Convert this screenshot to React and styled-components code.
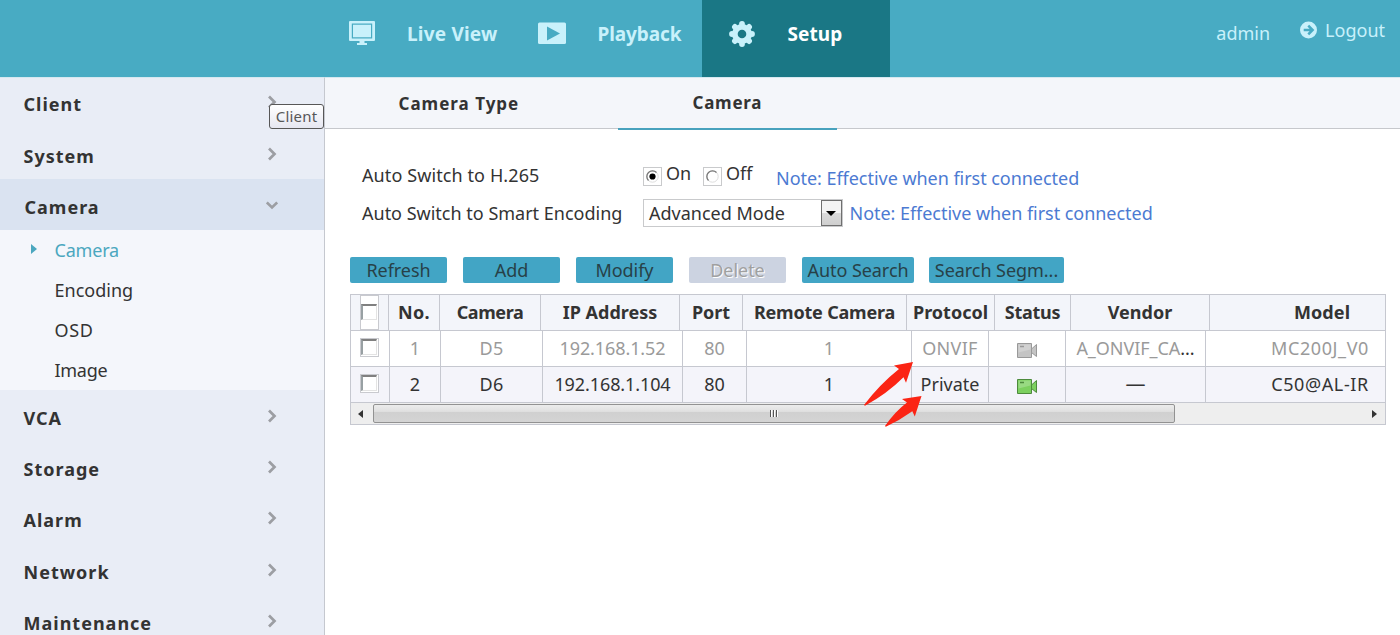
import React from 'react';
import styled, { createGlobalStyle } from 'styled-components';

const GlobalStyle = createGlobalStyle`
  * {
    box-sizing: border-box;
  }

  body {
    margin: 0;
    overflow: hidden;
    background: #fff;
    color: #333;
    font-family: 'Noto Sans', 'Open Sans', sans-serif;
    font-size: 18px;
    line-height: 24px;
  }
`;

const Page = styled.div`
  position: relative;
  display: flex;
  flex-direction: column;
  height: 635px;
  overflow: hidden;
`;

/* Header */

const Header = styled.header`
  display: flex;
  flex: none;
  height: 77px;
  padding-left: 326px;
  background: #48abc3;
  color: #c9f1fb;
`;

const NavItem = styled.a`
  display: grid;
  grid-template-columns: ${props => props.$iconWidth}px auto;
  justify-content: start;
  align-items: start;
  width: 188px;
  padding: 21px 0 0 ${props => props.$left}px;
  background: ${props => (props.$active ? '#1a7785' : 'transparent')};
  color: ${props => (props.$active ? '#fff' : 'inherit')};
  font-size: 19px;
  font-weight: 700;
  line-height: 27px;
  letter-spacing: ${props => props.$spacing || 0}px;

  svg {
    display: block;
    margin-top: -1px;
  }
`;

const UserArea = styled.div`
  display: flex;
  align-items: flex-start;
  margin-left: auto;
  padding: 18px 15px 0 0;

  svg {
    margin: 3px 8px 0 30px;
  }
`;

const UserName = styled.span`
  padding-top: 3px;
`;

/* Sidebar */

const Body = styled.div`
  display: flex;
  flex: 1;
`;

const Sidebar = styled.nav`
  flex: none;
  width: 325px;
  border-top: 1px solid #d5e8f0;
  border-right: 1px solid #c5c8cf;
  background: #e9edf6;
`;

const MenuItem = styled.a`
  display: flex;
  align-items: center;
  justify-content: space-between;
  height: ${props => props.$height}px;
  padding: ${props => props.$top}px 46px 0 ${props => (props.$open ? 24.500 : 23.500)}px;
  background: ${props => (props.$open ? '#dae3f1' : 'transparent')};
  font-weight: 700;
  letter-spacing: 1px;

  svg {
    flex: none;
    margin-top: -4px;
  }
`;

const SubMenu = styled.div`
  height: 160px;
  background: #f4f6fb;
`;

const SubItem = styled.a`
  display: grid;
  grid-template-columns: 25px auto;
  align-items: center;
  height: 40px;
  padding-left: 29.500px;
  color: ${props => (props.$active ? '#4ba7bf' : '#333')};
  letter-spacing: ${props => props.$spacing || 0}px;
`;

const Marker = styled.i`
  width: 0;
  margin: -3px 0 0 1px;
  border: solid transparent;
  border-width: 5px 0 5px 6px;
  border-left-color: ${props => (props.$active ? '#4ba7bf' : 'transparent')};
`;

const Tooltip = styled.div`
  position: absolute;
  left: 269px;
  top: 104px;
  width: 55px;
  height: 25px;
  border: 1px solid #575757;
  border-radius: 3px;
  background: linear-gradient(#fff, #e6e7f1);
  color: #575757;
  font-size: 15px;
  line-height: 22px;
  letter-spacing: 0.2px;
  text-align: center;
`;

/* Content */

const Content = styled.main`
  flex: 1;
  min-width: 0;
`;

const Tabs = styled.div`
  display: flex;
  height: 52px;
  border-top: 1px solid #d5e8f0;
  border-bottom: 1px solid #c6c8cc;
  background: #f4f6fa;
`;

const Tab = styled.a`
  width: ${props => props.$width}px;
  height: ${props => (props.$active ? 52 : 50)}px;
  padding: ${props => (props.$active ? '13px 0 0 74.5px' : '14px 0 0 73.5px')};
  border-bottom: ${props => (props.$active ? '2px solid #48a2bd' : '0')};
  font-size: 17px;
  font-weight: 700;
  letter-spacing: ${props => (props.$active ? 0.75 : 1)}px;
`;

const Form = styled.div`
  display: grid;
  row-gap: 9px;
  padding: 33px 0 0 37px;
`;

const FormRow = styled.div`
  display: flex;
  align-items: flex-start;
  height: ${props => props.$height}px;
`;

const Label = styled.label`
  width: 281px;
  padding-top: ${props => props.$top}px;
  letter-spacing: ${props => props.$spacing || 0}px;
`;

const RadioBox = styled.span`
  display: grid;
  place-items: center;
  width: 19px;
  height: 19px;
  margin: 5px 4px 0 0;
  border: 1px solid #c9cacc;
`;

const RadioText = styled.span`
  width: ${props => props.$width}px;
  margin-top: -1px;
`;

const Note = styled.span`
  padding-top: ${props => props.$top}px;
  padding-left: ${props => props.$left}px;
  color: #4c7ad2;
  letter-spacing: -0.04px;
`;

const Select = styled.div`
  display: flex;
  justify-content: space-between;
  width: 200px;
  height: 28px;
  padding-left: 5px;
  border: 1px solid #c9cacc;
  line-height: 26px;
`;

const SelectButton = styled.span`
  display: grid;
  place-items: center;
  width: 21px;
  height: 26px;
  border: 1px solid #6f6f6f;
  background: linear-gradient(#f3f3f3 48%, #dadada 50%, #cfcfcf);
`;

const Caret = styled.i`
  margin-right: 1px;
  border: solid transparent;
  border-width: 5px 5px 0;
  border-top-color: #000;
`;

const Toolbar = styled.div`
  display: flex;
  padding: 30px 0 0 25px;
`;

const Button = styled.button`
  width: ${props => props.$width || 97}px;
  height: 26px;
  margin-right: ${props => props.$gap || 16}px;
  padding: 0;
  border: 0;
  border-radius: 2px;
  background: ${props => (props.disabled ? '#ccd3e1' : '#42a5c5')};
  color: ${props => (props.disabled ? '#a0a0a0' : '#274148')};
  font: inherit;
  line-height: 26px;
  letter-spacing: -0.05px;
  text-shadow: ${props => (props.disabled ? '1px 1px 0 #fff' : 'none')};
`;

/* Camera table */

const Table = styled.div`
  width: 1036px;
  margin: 11px 0 0 25px;
  border: 1px solid #c6c8d0;
  overflow: hidden;
`;

const Row = styled.div`
  display: grid;
  grid-template-columns: 39px 51px 102px 140px 64px 165px 77px 77px 140px 229px;
  height: 36px;
  border-bottom: 1px solid #c6c8d0;
  background: ${props => (props.$shaded ? '#f4f4fa' : '#fff')};
  color: ${props => (props.$offline ? '#9a9a9a' : '#333')};
`;

const HeadRow = styled(Row)`
  grid-template-columns: 38px 51px 101px 139px 63px 164px 88px 76px 139px 225px;
  background: #f3f5fa;
  font-weight: 700;
`;

const Cell = styled.div`
  display: flex;
  align-items: center;
  justify-content: center;
  padding-bottom: 2px;
  border-right: 1px solid #c6c8d0;
  letter-spacing: ${props => props.$spacing || 0}px;
  white-space: nowrap;
`;

const CheckCell = styled(Cell)`
  align-items: flex-start;
  justify-content: flex-start;
  padding: ${props => (props.$head ? 0 : 7)}px 0 0 9px;
`;

const IconCell = styled(Cell)`
  padding-top: 5px;
  padding-bottom: 0;
`;

const Ellipsis = styled.span`
  color: #333;
`;

const Dash = styled.span`
  width: 20px;
  text-align: center;
  font-size: 20px;
`;

const CheckFrame = styled.span`
  width: 19px;
  height: ${props => (props.$head ? 35 : 19)}px;
  padding: ${props => (props.$head ? 8 : 0)}px 0 0 0;
  border: 1px solid #c9cacf;
  background: #fff;
`;

const Check = styled.span`
  display: block;
  width: 16px;
  height: 16px;
  border: 1px solid #e3e3e3;
  border-top: 2px solid #808080;
  border-left: 2px solid #98a0a3;
  background: #fff;
`;

const ScrollBar = styled.div`
  display: grid;
  grid-template-columns: 22px 802px 1fr;
  align-items: center;
  height: 21px;
  background: #eee;
`;

const Thumb = styled.div`
  display: flex;
  align-items: center;
  justify-content: center;
  gap: 1px;
  height: 19px;
  border: 1px solid #929292;
  border-radius: 2px;
  background: linear-gradient(#ececec, #e0e0e0 38%, #d0d0d0 42%, #d4d4d4);
`;

const Grip = styled.i`
  width: 2px;
  height: 7px;
  border-left: 1px solid #555;
  background: #fff;
`;

const ScrollArrow = styled.i`
  justify-self: ${props => (props.$right ? 'end' : 'start')};
  margin: ${props => (props.$right ? '0 8px 0 0' : '0 0 0 7px')};
  border: solid transparent;
  border-width: ${props => (props.$right ? '4px 0 4px 5px' : '4px 5px 4px 0')};
  border-left-color: ${props => (props.$right ? '#333' : 'transparent')};
  border-right-color: ${props => (props.$right ? 'transparent' : '#333')};
`;

const Pointers = styled.svg`
  position: absolute;
  left: 860px;
  top: 358px;
`;

const MonitorIcon = () => (
  <svg width="26" height="26" viewBox="0 0 26 26">
    <path fill="#c9f1fb" fillRule="evenodd" d="M1 1h24q1 0 1 1v18q0 1-1 1H1q-1 0-1-1V2q0-1 1-1zM2.800 3.500v15h20.400v-15z" />
    <path fill="#c9f1fb" d="M4 4.700h18v12.600H4zM10.500 21h5v2h2.500v2H8v-2h2.500z" />
  </svg>
);

const PlayIcon = () => (
  <svg width="28" height="26" viewBox="0 0 28 26">
    <rect y="2.500" width="28" height="21.500" rx="1.500" fill="#c9f1fb" />
    <path fill="#48abc3" d="M9 6.500l13 7-13 7z" />
  </svg>
);

const teeth = [0, 45, 90, 135, 180, 225, 270, 315];

const GearIcon = () => (
  <svg width="26" height="28" viewBox="-13 -14 26 28">
    <g fill="#c9f1fb">
      {teeth.map(a => (
        <circle key={a} cy="-10" r="2.900" transform={`rotate(${a})`} />
      ))}
      <circle r="10" />
    </g>
    <circle r="4.300" fill="#1a7785" />
  </svg>
);

const LogoutIcon = () => (
  <svg width="17" height="18" viewBox="0 0 17 18">
    <circle cx="8.500" cy="9" r="8.500" fill="#c9f1fb" />
    <path d="M3.700 9h8M8.300 4.700L12.600 9l-4.300 4.300" fill="none" stroke="#48abc3" strokeWidth="2.500" />
  </svg>
);

const Chevron = ({ open }) => (
  <svg width="12" height="14" viewBox="0 0 12 14">
    <path
      d={open ? 'M.8 4.500L6 9.500l5.200-5' : 'M3 1.500L8.500 7 3 12.500'}
      fill="none"
      stroke="#9c9ea3"
      strokeWidth="2.700"
    />
  </svg>
);

const CameraIcon = ({ online }) => {
  const fill = online ? '#7cd05f' : '#c4c4c4';
  const line = online ? '#4d8a3c' : '#999';
  return (
    <svg width="20" height="16" viewBox="0 0 20 16">
      <path d="M.5.500h14v14H.500z" fill={fill} stroke={line} />
      <path d="M1.500 1.500h12v5l-12 3z" fill="#fff" opacity=".22" />
      <path d="M14.500 6l5-4.500v12l-5-4z" fill={fill} stroke={line} />
      <path d="M3 3.500h4" stroke={line} strokeWidth="1.500" />
    </svg>
  );
};

const Radio = ({ checked }) => (
  <svg width="13" height="13" viewBox="0 0 13 13">
    <circle cx="6.500" cy="6.500" r="5.700" fill="#fff" stroke="#ddd" />
    <path d="M2.500 10.500A5.600 5.600 0 0 1 10.500 2.500" fill="none" stroke="#777" strokeWidth="1.300" />
    {checked && <circle cx="6.500" cy="6.500" r="3.100" fill="#000" />}
  </svg>
);

const topMenu = ['Client', 'System', 'Camera'];
const bottomMenu = ['VCA', 'Storage', 'Alarm', 'Network', 'Maintenance'];
const subMenu = [['Camera', -0.2], ['Encoding', 0], ['OSD', 0.6], ['Image', -0.3]];

const columns = [
  ['No.', 0.4],
  ['Camera', -0.4],
  ['IP Address'],
  ['Port', -0.1],
  ['Remote Camera', -0.2],
  ['Protocol'],
  ['Status', -0.3],
  ['Vendor'],
  ['Model', 0.1]
];

const cameras = [
  { no: 1, name: 'D5', ip: '192.168.1.52', protocol: 'ONVIF', vendor: 'A_ONVIF_CA', model: 'MC200J_V0' },
  { no: 2, name: 'D6', ip: '192.168.1.104', protocol: 'Private', model: 'C50@AL-IR', online: true }
];

const CameraRow = ({ camera }) => (
  <Row $shaded={camera.online} $offline={!camera.online}>
    <CheckCell>
      <CheckFrame>
        <Check />
      </CheckFrame>
    </CheckCell>
    <Cell>{camera.no}</Cell>
    <Cell $spacing={0.3}>{camera.name}</Cell>
    <Cell $spacing={-0.1}>{camera.ip}</Cell>
    <Cell>80</Cell>
    <Cell>1</Cell>
    <Cell $spacing={camera.online ? 0 : 0.3}>{camera.protocol}</Cell>
    <IconCell>
      <CameraIcon online={camera.online} />
    </IconCell>
    <Cell $spacing={-0.05}>
      {camera.vendor ? <>{camera.vendor}<Ellipsis>...</Ellipsis></> : <Dash>—</Dash>}
    </Cell>
    <Cell $spacing={0.6}>{camera.model}</Cell>
  </Row>
);

export default () => (
  <Page>
    <GlobalStyle />
    <Header>
      <NavItem $left={23} $iconWidth={58} $spacing={0.2}>
        <MonitorIcon />
        Live View
      </NavItem>
      <NavItem $left={24} $iconWidth={59.5} $spacing={-0.1}>
        <PlayIcon />
        Playback
      </NavItem>
      <NavItem $left={27} $iconWidth={58.5} $spacing={0.1} $active>
        <GearIcon />
        Setup
      </NavItem>
      <UserArea>
        <UserName>admin</UserName>
        <LogoutIcon />
        <span>Logout</span>
      </UserArea>
    </Header>
    <Body>
      <Sidebar>
        {topMenu.map(name => (
          <MenuItem
            key={name}
            $height={name === 'Client' ? 50 : 51}
            $top={name === 'Client' ? 2 : 4}
            $open={name === 'Camera'}
          >
            {name}
            <Chevron open={name === 'Camera'} />
          </MenuItem>
        ))}
        <SubMenu>
          {subMenu.map(([name, spacing]) => (
            <SubItem key={name} $active={name === 'Camera'} $spacing={spacing}>
              <Marker $active={name === 'Camera'} />
              {name}
            </SubItem>
          ))}
        </SubMenu>
        {bottomMenu.map(name => (
          <MenuItem key={name} $height={51.3} $top={4}>
            {name}
            <Chevron />
          </MenuItem>
        ))}
      </Sidebar>
      <Content>
        <Tabs>
          <Tab $width={293}>Camera Type</Tab>
          <Tab $width={219} $active>Camera</Tab>
        </Tabs>
        <Form>
          <FormRow $height={28}>
            <Label $top={1} $spacing={0.1}>Auto Switch to H.265</Label>
            <RadioBox>
              <Radio checked />
            </RadioBox>
            <RadioText $width={37}>On</RadioText>
            <RadioBox>
              <Radio />
            </RadioBox>
            <RadioText $width={26}>Off</RadioText>
            <Note $top={4} $left={24}>Note: Effective when first connected</Note>
          </FormRow>
          <FormRow $height={28}>
            <Label $top={2}>Auto Switch to Smart Encoding</Label>
            <Select>
              Advanced Mode
              <SelectButton>
                <Caret />
              </SelectButton>
            </Select>
            <Note $top={2} $left={6.5}>Note: Effective when first connected</Note>
          </FormRow>
        </Form>
        <Toolbar>
          <Button>Refresh</Button>
          <Button>Add</Button>
          <Button>Modify</Button>
          <Button disabled>Delete</Button>
          <Button $width={112} $gap={15}>Auto Search</Button>
          <Button $width={135}>Search Segm...</Button>
        </Toolbar>
        <Table>
          <HeadRow>
            <CheckCell $head>
              <CheckFrame $head>
                <Check />
              </CheckFrame>
            </CheckCell>
            {columns.map(([name, spacing]) => (
              <Cell key={name} $spacing={spacing}>{name}</Cell>
            ))}
          </HeadRow>
          {cameras.map(camera => (
            <CameraRow key={camera.no} camera={camera} />
          ))}
          <ScrollBar>
            <ScrollArrow />
            <Thumb>
              <Grip />
              <Grip />
              <Grip />
            </Thumb>
            <ScrollArrow $right />
          </ScrollBar>
        </Table>
      </Content>
    </Body>
    <Tooltip>Client</Tooltip>
    <Pointers width="64" height="72" viewBox="860 358 64 72">
      <g fill="#fb2414">
        <path d="M913 362l-19 3.500 5 3.500q-19 15-35 36l1 .8q22-12 38.500-28.500l2.500 5.500z" />
        <path d="M921.500 396l-19.500 3 5 3.500q-12 9-22 23.500l.8.700q14-6.500 26.500-15.500l2.500 5.300z" />
      </g>
    </Pointers>
  </Page>
);
